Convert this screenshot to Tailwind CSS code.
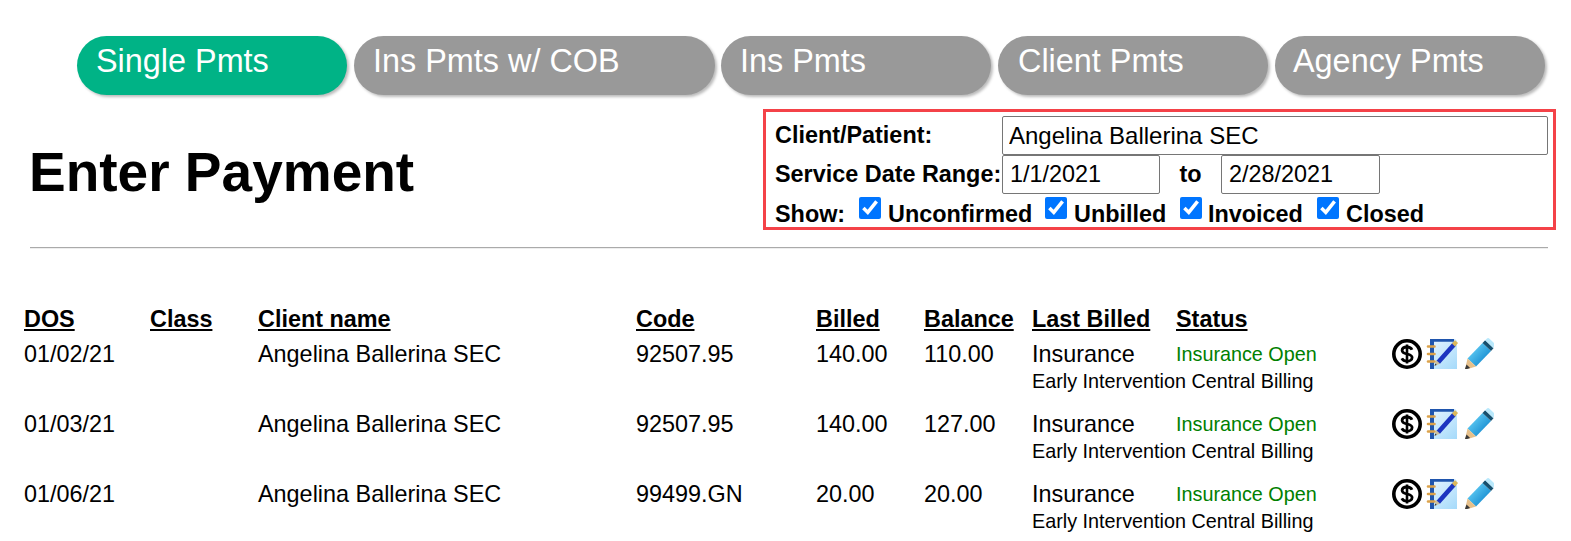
<!DOCTYPE html>
<html lang="en">
<head>
    <meta charset="UTF-8">
    <title>Enter Payment</title>
    <script src="https://cdn.jsdelivr.net/npm/@tailwindcss/browser@4"></script>
</head>
<body class="bg-white text-black font-['Liberation_Sans',Arial,sans-serif] overflow-hidden h-[541px]">
    <!-- tabs -->
    <nav class="flex pt-[36px] pl-[77px] text-white text-[32.4px] leading-[50px]">
        <a class="w-[270px] h-[59px] pl-[19px] rounded-[30px] bg-[#00b386] shadow-[2px_2px_3px_#bbb]">Single Pmts</a>
        <a class="w-[361px] h-[59px] ml-[7px] pl-[19px] rounded-[30px] bg-[#999] shadow-[2px_2px_3px_#bbb]">Ins Pmts w/ COB</a>
        <a class="w-[270px] h-[59px] ml-[6px] pl-[19px] rounded-[30px] bg-[#999] shadow-[2px_2px_3px_#bbb]">Ins Pmts</a>
        <a class="w-[270px] h-[59px] ml-[7px] pl-[20px] rounded-[30px] bg-[#999] shadow-[2px_2px_3px_#bbb]">Client Pmts</a>
        <a class="w-[270px] h-[59px] ml-[7px] pl-[18px] rounded-[30px] bg-[#999] shadow-[2px_2px_3px_#bbb]">Agency Pmts</a>
    </nav>

    <!-- heading + filters -->
    <div class="flex mt-[14px] pl-[29px]">
        <h1 class="w-[734px] pt-[31px] text-[55px] leading-[64px] font-bold">Enter Payment</h1>
        <form class="w-[793px] h-[121px] border-[3px] border-[#f44248] pl-[9px] pt-[4px] text-[23.4px] font-bold">
            <div class="flex h-[39px]">
                <label class="w-[227px] leading-[39px]">Client/Patient:</label>
                <input class="w-[546px] h-[39px] px-[6px] border border-[#767676] rounded-[2px] text-[24px] font-normal" value="Angelina Ballerina SEC">
            </div>
            <div class="flex h-[39px]">
                <label class="w-[227px] leading-[39px] whitespace-nowrap">Service Date Range:</label>
                <input class="w-[158px] h-[39px] px-[7px] border border-[#767676] rounded-[2px] text-[23.4px] font-normal" value="1/1/2021">
                <span class="w-[61px] text-center leading-[38px]">to</span>
                <input class="w-[159px] h-[39px] px-[7px] border border-[#767676] rounded-[2px] text-[23.4px] font-normal" value="2/28/2021">
            </div>
            <div class="flex items-start h-[33px] leading-[40px]">
                <span class="w-[84px]">Show:</span>
                <input type="checkbox" checked class="w-[22px] h-[22px] mt-[3px] accent-[#0075ff]">
                <span class="ml-[7px] w-[157px]">Unconfirmed</span>
                <input type="checkbox" checked class="w-[22px] h-[22px] mt-[3px] accent-[#0075ff]">
                <span class="ml-[7px] w-[106px]">Unbilled</span>
                <input type="checkbox" checked class="w-[22px] h-[22px] mt-[3px] accent-[#0075ff]">
                <span class="ml-[6px] w-[109px]">Invoiced</span>
                <input type="checkbox" checked class="w-[22px] h-[22px] mt-[3px] accent-[#0075ff]">
                <span class="ml-[7px]">Closed</span>
            </div>
        </form>
    </div>

    <hr class="ml-[30px] w-[1518px] mt-[17px] border-t border-b border-t-[#aaa] border-b-[#eee]">

    <!-- payments -->
    <table class="mt-[56px] ml-[24px] table-fixed w-[1500px] text-[23.4px] leading-[27px] border-collapse">
        <colgroup>
            <col class="w-[126px]"><col class="w-[108px]"><col class="w-[378px]"><col class="w-[180px]"><col class="w-[108px]"><col class="w-[108px]"><col class="w-[144px]"><col class="w-[213px]"><col>
        </colgroup>
        <thead>
            <tr class="font-bold underline text-left">
                <th class="h-[28px] p-0">DOS</th><th class="p-0">Class</th><th class="p-0">Client name</th><th class="p-0">Code</th><th class="p-0">Billed</th><th class="p-0">Balance</th><th class="p-0 whitespace-nowrap">Last Billed</th><th class="p-0">Status</th><th class="p-0"></th>
            </tr>
        </thead>
        <tbody>
            <tr class="h-[36px] align-top [&>td]:pt-[8px]">
                <td>01/02/21</td><td></td><td>Angelina Ballerina SEC</td><td>92507.95</td><td>140.00</td><td>110.00</td><td>Insurance</td><td class="text-[19.8px] text-[#008000]">Insurance Open</td>
                <td class="!pt-0"><svg class="w-[105px] h-[36px] block" viewBox="0 0 105 36"><use href="#row-icons"/></svg></td>
            </tr>
            <tr class="h-[34px] align-top"><td colspan="6"></td><td colspan="3" class="text-[19.8px] leading-[24px] whitespace-nowrap">Early Intervention Central Billing</td></tr>
            <tr class="h-[36px] align-top [&>td]:pt-[8px]">
                <td>01/03/21</td><td></td><td>Angelina Ballerina SEC</td><td>92507.95</td><td>140.00</td><td>127.00</td><td>Insurance</td><td class="text-[19.8px] text-[#008000]">Insurance Open</td>
                <td class="!pt-0"><svg class="w-[105px] h-[36px] block" viewBox="0 0 105 36"><use href="#row-icons"/></svg></td>
            </tr>
            <tr class="h-[34px] align-top"><td colspan="6"></td><td colspan="3" class="text-[19.8px] leading-[24px] whitespace-nowrap">Early Intervention Central Billing</td></tr>
            <tr class="h-[36px] align-top [&>td]:pt-[8px]">
                <td>01/06/21</td><td></td><td>Angelina Ballerina SEC</td><td>99499.GN</td><td>20.00</td><td>20.00</td><td>Insurance</td><td class="text-[19.8px] text-[#008000]">Insurance Open</td>
                <td class="!pt-0"><svg class="w-[105px] h-[36px] block" viewBox="0 0 105 36"><use href="#row-icons"/></svg></td>
            </tr>
            <tr class="h-[34px] align-top"><td colspan="6"></td><td colspan="3" class="text-[19.8px] leading-[24px] whitespace-nowrap">Early Intervention Central Billing</td></tr>
        </tbody>
    </table>

    <!-- shared row icons: dollar, notepad, pencil -->
    <svg class="absolute w-0 h-0">
        <defs>
            <linearGradient id="pad" gradientUnits="userSpaceOnUse" x1="42" y1="6" x2="68" y2="36"><stop offset="0" stop-color="#e6f5ff"/><stop offset="1" stop-color="#a5dafa"/></linearGradient>
            <linearGradient id="pen" gradientUnits="userSpaceOnUse" x1="85" y1="16" x2="98" y2="28"><stop offset="0" stop-color="#5cc8f2"/><stop offset="1" stop-color="#1a8fd2"/></linearGradient>
            <g id="row-icons">
                <!-- dollar coin -->
                <circle cx="18" cy="21" r="13.200" fill="#fff" stroke="#000" stroke-width="3.600"/>
                <path d="M23 16.800c-.8-1.800-2.700-2.800-5-2.800-2.900 0-4.900 1.400-4.900 3.500 0 4.600 10 2.400 10 7 0 2.200-2.200 3.700-5.100 3.700-2.400 0-4.300-1-5.200-2.800" fill="none" stroke="#000" stroke-width="2.800"/>
                <path d="M18 11.500v19" stroke="#000" stroke-width="2.600"/>
                <!-- notepad -->
                <path d="M41 6h25l2 2v28H41z" fill="url(#pad)"/>
                <path d="M41 6h24v2.800H45V36h-4z" fill="#1f55ad"/>
                <path d="M39 13.500h6.500M39 21h6.500M39 28.500h6.500" stroke="#dca24a" stroke-width="2.600" stroke-linecap="round" fill="none"/>
                <path d="M49 29.500L65.500 11" stroke="#1c35c0" stroke-width="4.600"/>
                <path d="M64.500 12l3-3.300" stroke="#dcb85a" stroke-width="4.200"/>
                <path d="M47.300 27.300l3.800 3.500-5.600 1.900z" fill="#c8c0a0"/>
                <path d="M46.500 30.500l-1 2.200 2.200-.8z" fill="#333"/>
                <!-- pencil -->
                <g transform="translate(-1.500 0)">
                    <path d="M80 25.500L95 10l8.500 8L88.500 33.500z" fill="url(#pen)"/>
                    <path d="M95 10l2.700-2.700 8.300 8-2.500 2.700z" fill="#16506e"/>
                    <path d="M97.700 7.300l1.500-1.500a2 2 0 0 1 2.800 0l4.500 4.300a2 2 0 0 1 0 2.800L106 15.300z" fill="#b9e8fb"/>
                    <path d="M80 25.500l8.500 8-11 3.300z" fill="#e7c08a"/>
                    <path d="M79 31.500l-1.800 5.200 5.400-1.700z" fill="#3a3a3a"/>
                </g>
            </g>
        </defs>
    </svg>
</body>
</html>
